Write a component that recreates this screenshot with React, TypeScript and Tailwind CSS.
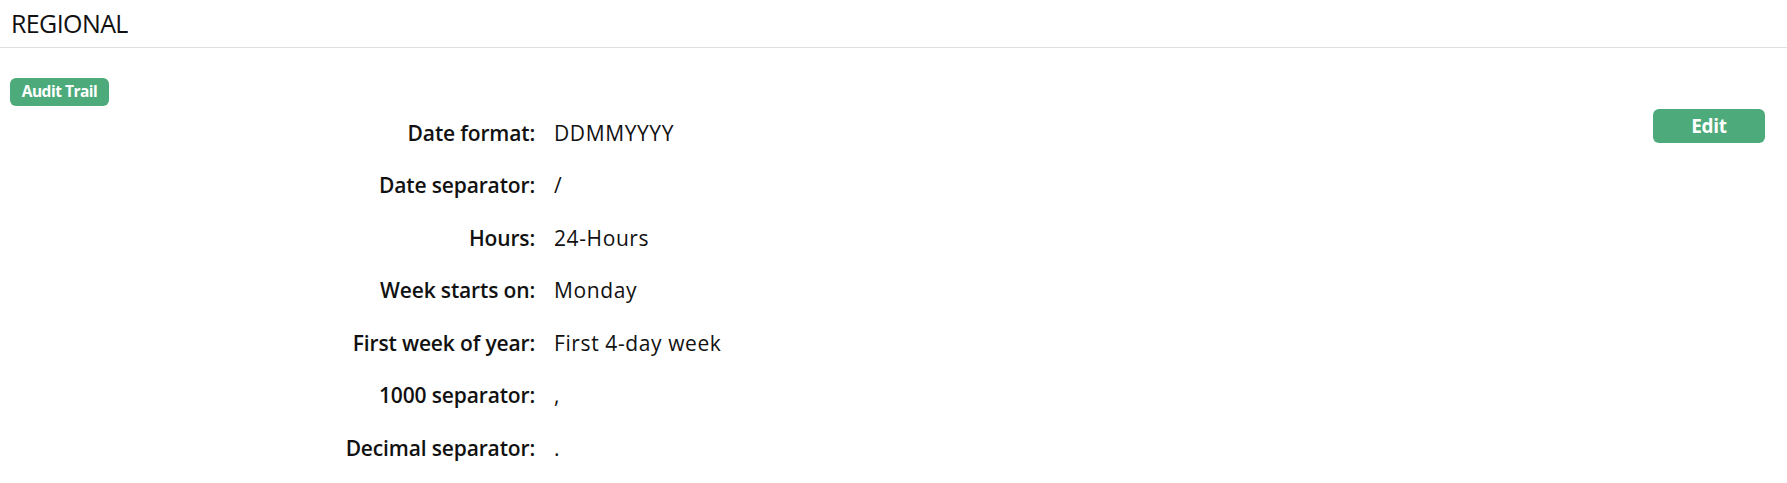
const rows: Array<[string, string]> = [
  ['Date format:', 'DDMMYYYY'],
  ['Date separator:', '/'],
  ['Hours:', '24-Hours'],
  ['Week starts on:', 'Monday'],
  ['First week of year:', 'First 4-day week'],
  ['1000 separator:', ','],
  ['Decimal separator:', '.'],
];

export default function App() {
  return (
    <div className="min-h-screen bg-white text-[#111] font-['Open_Sans',sans-serif]">
      {/* Header */}
      <div className="h-[48px] flex items-center px-[11px] border-b border-[#dedede]">
        <h1 className="text-[25px] font-normal tracking-[-0.6px]">REGIONAL</h1>
      </div>

      <div className="px-[10px] pt-[30px]">
        <span className="inline-flex items-center justify-center h-[28px] w-[99px] rounded-[6px] bg-[#4caa7b] text-white text-[15.5px] font-bold tracking-[-0.5px]">
          Audit Trail
        </span>

        <div className="flex justify-between pt-[1px]">
          <div className="grid grid-cols-[525px_1fr] gap-x-[19px]">
            {rows.map(([label, value]) => (
              <div key={label} className="contents">
                <div className="h-[52.5px] flex items-center justify-end text-[21px] font-semibold tracking-[-0.15px]">
                  {label}
                </div>
                <div className="h-[52.5px] flex items-center text-[21px] font-normal tracking-[0.6px]">
                  {value}
                </div>
              </div>
            ))}
          </div>

          <div className="pt-[2px] pr-[12px]">
            <button className="h-[34px] w-[112px] rounded-[6px] bg-[#4caa7b] text-white text-[19px] font-bold tracking-[-0.3px]">
              Edit
            </button>
          </div>
        </div>
      </div>
    </div>
  );
}
